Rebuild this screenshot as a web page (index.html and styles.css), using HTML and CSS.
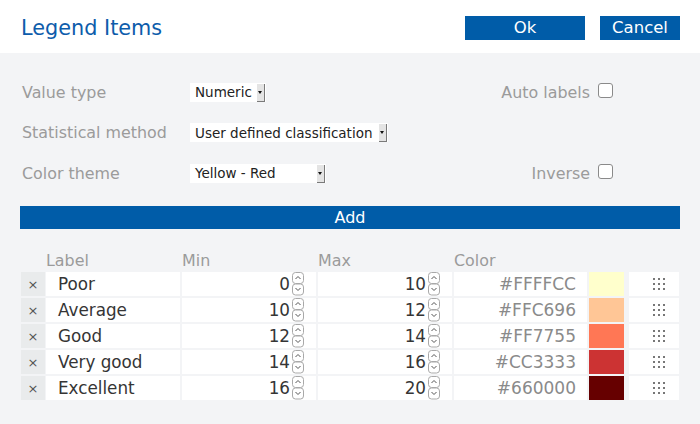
FILE: index.html
```html
<!DOCTYPE html>
<html>
<head>
<meta charset="utf-8">
<link rel="stylesheet" href="styles.css">
</head>
<body>
<svg class="defs" width="0" height="0">
  <symbol id="spin" viewBox="0 0 12 24">
    <rect x="0.5" y="0.5" width="11" height="11" rx="3" fill="#fff" stroke="#a9a9a9"/>
    <polyline points="3.5,7 6,4.5 8.5,7" fill="none" stroke="#555" stroke-width="1"/>
    <rect x="0.5" y="12" width="11" height="11" rx="3" fill="#fff" stroke="#a9a9a9"/>
    <polyline points="3.5,16 6,18.5 8.5,16" fill="none" stroke="#555" stroke-width="1"/>
  </symbol>
  <symbol id="dots" viewBox="0 0 12 12">
    <rect x="0" y="0" width="2" height="2"/><rect x="5" y="0" width="2" height="2"/><rect x="10" y="0" width="2" height="2"/>
    <rect x="0" y="5" width="2" height="2"/><rect x="5" y="5" width="2" height="2"/><rect x="10" y="5" width="2" height="2"/>
    <rect x="0" y="10" width="2" height="2"/><rect x="5" y="10" width="2" height="2"/><rect x="10" y="10" width="2" height="2"/>
  </symbol>
</svg>
<div class="header">
  <div class="title">Legend Items</div>
  <div class="actions">
    <div class="btn btn-ok">Ok</div>
    <div class="btn btn-cancel">Cancel</div>
  </div>
</div>
<div class="main">
  <div class="form">
    <div class="frow">
      <div class="flabel">Value type</div>
      <div class="select sel-1"><span class="stext">Numeric</span><span class="sarrow"></span></div>
      <div class="fright"><span class="flabel2">Auto labels</span><span class="check"></span></div>
    </div>
    <div class="frow">
      <div class="flabel">Statistical method</div>
      <div class="select sel-2"><span class="stext">User defined classification</span><span class="sarrow"></span></div>
    </div>
    <div class="frow">
      <div class="flabel">Color theme</div>
      <div class="select sel-3"><span class="stext">Yellow - Red</span><span class="sarrow"></span></div>
      <div class="fright"><span class="flabel2">Inverse</span><span class="check"></span></div>
    </div>
  </div>
  <div class="add">Add</div>
  <div class="table">
    <div class="trow thead">
      <div class="c-x"></div>
      <div class="c-label">Label</div>
      <div class="c-num">Min</div>
      <div class="c-num">Max</div>
      <div class="c-hex">Color</div>
      <div class="c-sw"></div>
      <div class="c-drag"></div>
    </div>
    <div class="trow">
      <div class="cell c-x">×</div>
      <div class="cell c-label">Poor</div>
      <div class="cell c-num"><span>0</span><svg class="spin"><use href="#spin"/></svg></div>
      <div class="cell c-num"><span>10</span><svg class="spin"><use href="#spin"/></svg></div>
      <div class="cell c-hex">#FFFFCC</div>
      <div class="c-sw" style="background:#FFFFCC"></div>
      <div class="cell c-drag"><svg class="dots"><use href="#dots"/></svg></div>
    </div>
    <div class="trow">
      <div class="cell c-x">×</div>
      <div class="cell c-label">Average</div>
      <div class="cell c-num"><span>10</span><svg class="spin"><use href="#spin"/></svg></div>
      <div class="cell c-num"><span>12</span><svg class="spin"><use href="#spin"/></svg></div>
      <div class="cell c-hex">#FFC696</div>
      <div class="c-sw" style="background:#FFC696"></div>
      <div class="cell c-drag"><svg class="dots"><use href="#dots"/></svg></div>
    </div>
    <div class="trow">
      <div class="cell c-x">×</div>
      <div class="cell c-label">Good</div>
      <div class="cell c-num"><span>12</span><svg class="spin"><use href="#spin"/></svg></div>
      <div class="cell c-num"><span>14</span><svg class="spin"><use href="#spin"/></svg></div>
      <div class="cell c-hex">#FF7755</div>
      <div class="c-sw" style="background:#FF7755"></div>
      <div class="cell c-drag"><svg class="dots"><use href="#dots"/></svg></div>
    </div>
    <div class="trow">
      <div class="cell c-x">×</div>
      <div class="cell c-label">Very good</div>
      <div class="cell c-num"><span>14</span><svg class="spin"><use href="#spin"/></svg></div>
      <div class="cell c-num"><span>16</span><svg class="spin"><use href="#spin"/></svg></div>
      <div class="cell c-hex">#CC3333</div>
      <div class="c-sw" style="background:#CC3333"></div>
      <div class="cell c-drag"><svg class="dots"><use href="#dots"/></svg></div>
    </div>
    <div class="trow">
      <div class="cell c-x">×</div>
      <div class="cell c-label">Excellent</div>
      <div class="cell c-num"><span>16</span><svg class="spin"><use href="#spin"/></svg></div>
      <div class="cell c-num"><span>20</span><svg class="spin"><use href="#spin"/></svg></div>
      <div class="cell c-hex">#660000</div>
      <div class="c-sw" style="background:#660000"></div>
      <div class="cell c-drag"><svg class="dots"><use href="#dots"/></svg></div>
    </div>
  </div>
</div>
</body>
</html>
```
FILE: styles.css
```css
* { box-sizing: border-box; }
html, body { margin: 0; padding: 0; }
body {
  width: 700px;
  height: 424px;
  font-family: "DejaVu Sans", sans-serif;
  background: #f3f4f6;
  overflow: hidden;
}
.defs { position: absolute; width: 0; height: 0; }

.header {
  height: 53px;
  background: #fff;
  display: flex;
  align-items: flex-start;
  justify-content: space-between;
  padding: 16px 20px 0 21px;
}
.title {
  font-size: 20.8px;
  line-height: 24px;
  color: #0d5cab;
}
.actions { display: flex; gap: 15px; }
.btn {
  height: 24px;
  background: #005ca8;
  color: #fff;
  font-size: 16.5px;
  line-height: 24px;
  text-align: center;
}
.btn-ok { width: 120px; }
.btn-cancel { width: 80px; }

.main {
  padding: 29px 20px 0 20px;
}
.form {
  display: flex;
  flex-direction: column;
  gap: 20.5px;
}
.frow {
  height: 20px;
  display: flex;
  align-items: center;
  padding-left: 2px;
}
.flabel {
  width: 168px;
  font-size: 15.9px;
  color: #9b9b9b;
}
.flabel2 {
  font-size: 15.9px;
  color: #9b9b9b;
}
.select {
  height: 19px;
  background: #fff;
  display: flex;
  align-items: center;
  justify-content: space-between;
  padding-left: 5px;
  padding-right: 1px;
  font-size: 13.5px;
  color: #222;
}
.sel-1 { width: 76px; }
.sel-2 { width: 198px; }
.sel-3 { width: 136px; }
.sarrow {
  width: 8px;
  height: 18px;
  margin-top: 1px;
  background: #e4e4e4;
  border-right: 1px solid #7a7a7a;
  border-bottom: 1px solid #7a7a7a;
  position: relative;
}
.sarrow::after {
  content: "";
  position: absolute;
  left: 1px;
  top: 7px;
  border-left: 2.5px solid transparent;
  border-right: 2.5px solid transparent;
  border-top: 3px solid #111;
}
.fright {
  margin-left: auto;
  margin-right: 67px;
  display: flex;
  align-items: center;
  gap: 8px;
}
.check {
  width: 15px;
  height: 15px;
  border: 1px solid #8a8a8a;
  border-radius: 3px;
  background: #fff;
  margin-top: -3px;
}

.add {
  margin-top: 23px;
  height: 23px;
  background: #005ca8;
  color: #fff;
  font-size: 16px;
  line-height: 23px;
  text-align: center;
}

.table {
  margin-top: 23px;
  padding-left: 1px;
  display: flex;
  flex-direction: column;
  gap: 2px;
}
.trow {
  display: flex;
  gap: 2px;
  height: 24px;
}
.thead {
  height: 18px;
  font-size: 15.9px;
  line-height: 18px;
  color: #9b9b9b;
}
.cell {
  background: #fff;
  font-size: 16.8px;
  color: #353535;
  display: flex;
  align-items: center;
}
.c-x {
  width: 24px;
  margin-right: -1px;
}
.cell.c-x {
  background: #e9ebec;
  justify-content: center;
  font-size: 13px;
  color: #555;
}
.c-label { width: 134px; }
.cell.c-label { padding-left: 12px; }
.c-num { width: 134px; }
.cell.c-num {
  justify-content: flex-end;
  padding-right: 12px;
  gap: 2px;
}
.spin {
  width: 12px;
  height: 24px;
}
.c-hex { width: 133px; }
.cell.c-hex {
  justify-content: flex-end;
  padding-right: 11px;
  font-size: 17px;
  color: #8a8a8a;
}
.c-sw {
  width: 35px;
  margin-right: 3px;
}
.c-drag { width: 50px; }
.cell.c-drag { padding-left: 24px; }
.dots {
  width: 12px;
  height: 12px;
  fill: #777;
}
```
